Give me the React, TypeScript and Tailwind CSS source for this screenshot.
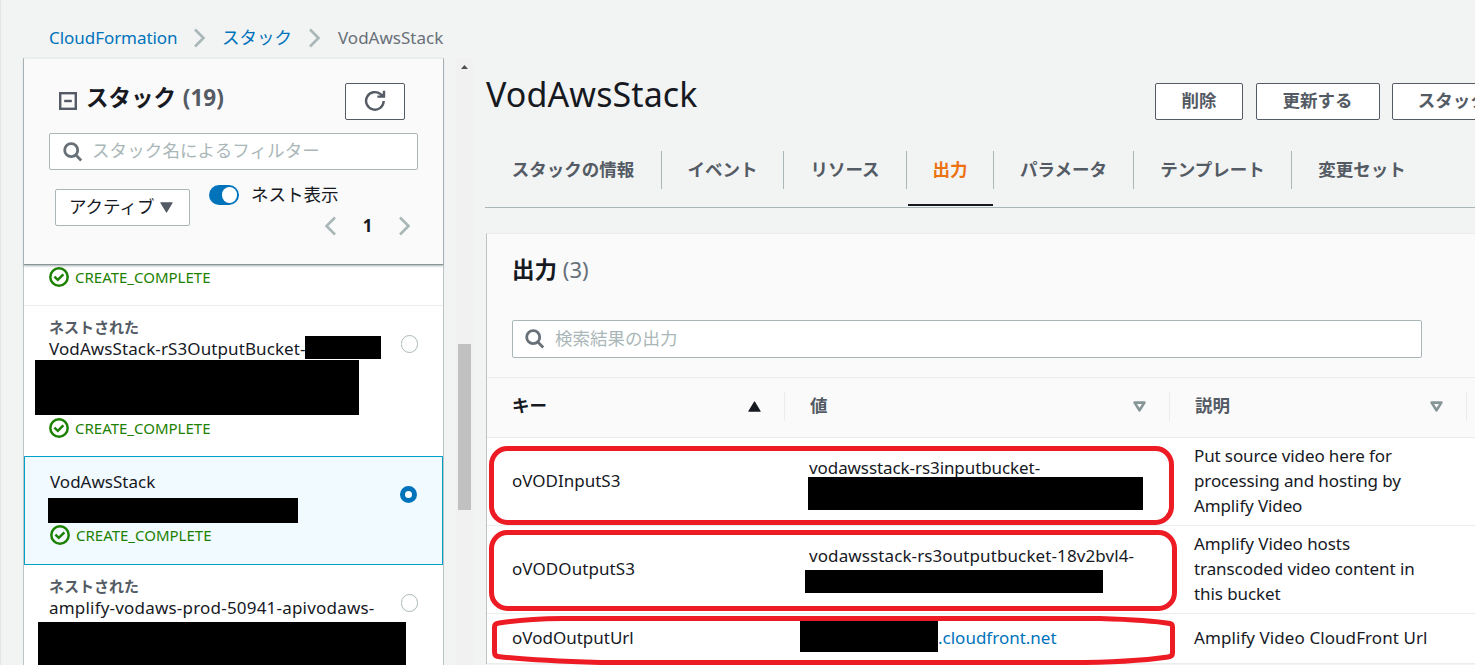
import { ReactNode } from "react";
import clsx from "clsx";

const TABS = [
  { label: "スタックの情報", width: "w-[177px]" },
  { label: "イベント", width: "w-[122px]" },
  { label: "リソース", width: "w-[123px]" },
  { label: "出力", width: "w-[87px]", active: true },
  { label: "パラメータ", width: "w-[140px]" },
  { label: "テンプレート", width: "w-[158px]" },
  { label: "変更セット", width: "w-[140px]" },
];

function Chevron({ left }: { left?: boolean }) {
  return (
    <svg
      width="14"
      height="22"
      viewBox="0 0 14 22"
      fill="none"
      stroke="#aab7b8"
      strokeWidth="2.6"
      className={clsx("shrink-0", left && "rotate-180")}
    >
      <path d="M2 2.5 10.5 11 2 19.5" />
    </svg>
  );
}

function SearchIcon() {
  return (
    <svg
      width="20"
      height="20"
      viewBox="0 0 20 20"
      fill="none"
      stroke="#687078"
      strokeWidth="2.8"
      className="shrink-0"
    >
      <circle cx="8.2" cy="8.2" r="6.5" />
      <path d="M12.6 12.8l5.6 5.6" />
    </svg>
  );
}

function RefreshIcon() {
  return (
    <svg width="22" height="22" viewBox="0 0 22 22" fill="none" stroke="#545b64" strokeWidth="2.4">
      <path d="M19.7 11A8.8 8.8 0 1 1 16.6 4.2L18.4 6" />
      <path d="M20 .8V6.6H13.4" />
      <path d="M20 2.6V6.6H15.6z" fill="#545b64" stroke="none" />
    </svg>
  );
}

function Estado() {
  return (
    <div className="flex h-5 items-center text-[15px] text-[#1d8102]">
      <svg
        width="20"
        height="20"
        viewBox="0 0 20 20"
        fill="none"
        stroke="#1d8102"
        strokeWidth="2.5"
        className="mr-[6px] shrink-0"
      >
        <circle cx="10" cy="10" r="8.7" />
        <path d="M5.4 9.6 8.8 12.8 14.4 7.3" />
      </svg>
      <span>CREATE_COMPLETE</span>
    </div>
  );
}

function Radio({ checked }: { checked?: boolean }) {
  return (
    <span
      className={clsx(
        "block size-[17.5px] shrink-0 rounded-full bg-white",
        checked ? "border-[5.5px] border-[#0073bb]" : "border border-[#aab7b8]",
      )}
    />
  );
}

function Oculto({ className }: { className: string }) {
  return <div className={clsx("absolute bg-black", className)} />;
}

function Boton({ children, className }: { children: ReactNode; className: string }) {
  return (
    <button
      className={clsx(
        "flex h-[37px] shrink-0 items-center justify-center rounded-[2px] border border-[#545b64] bg-white pb-[3px] text-[17.5px] font-bold whitespace-nowrap text-[#545b64]",
        className,
      )}
    >
      {children}
    </button>
  );
}

function Breadcrumbs() {
  return (
    <nav className="flex h-[58px] items-center pt-[18px] pl-[49px] text-[17px] text-[#0073bb]">
      <span className="w-[144px] tracking-[-0.05px]">CloudFormation</span>
      <Chevron />
      <span className="mb-0.5 ml-[15px] w-[86px] text-[17.5px]">スタック</span>
      <Chevron />
      <span className="ml-[16px] text-[#687078]">VodAwsStack</span>
    </nav>
  );
}

function StackList() {
  return (
    <aside className="flex h-[607px] w-[421px] shrink-0 flex-col border-x border-[#bcc3c6] bg-white">
      <div className="relative z-10 h-[207px] shrink-0 border-t border-b border-t-[#eaeded] border-b-[#879596] bg-[#fafafa] px-[25px] shadow-[0_1px_2px_rgba(0,28,36,0.35)]">
        <div className="flex h-[74px] pt-6">
          <svg width="18" height="18" viewBox="0 0 18 18" fill="none" stroke="#545b64" strokeWidth="2.4" className="mt-[9px] ml-[10px]">
            <rect x="1.2" y="1.2" width="15.6" height="15.6" />
            <path d="M5.2 9h7.6" />
          </svg>
          <h2 className="mt-[-1px] ml-[9px] text-[22.5px] leading-[32px] font-bold text-[#16191f]">
            スタック <span className="ml-px text-[#545b64]">(19)</span>
          </h2>
          <button className="mr-[13px] ml-auto flex h-[37px] w-[60px] items-center justify-center rounded-[2px] border border-[#545b64] bg-white pb-px">
            <RefreshIcon />
          </button>
        </div>
        <div className="flex h-[37px] w-[369px] items-center rounded-[2px] border border-[#aab7b8] bg-white pl-[13px]">
          <SearchIcon />
          <span className="mb-0.5 ml-[9px] text-[17.5px] tracking-[0.1px] text-[#aab7b8]">スタック名によるフィルター</span>
        </div>
        <div className="flex pt-[15px]">
          <div className="mt-1 ml-[6px] flex h-[37px] w-[135px] items-center rounded-[2px] border border-[#aab7b8] bg-white pl-[13px] text-[17.5px] text-[#16191f]">
            <span className="mb-0.5">アクティブ</span>
            <svg width="13" height="11" viewBox="0 0 13 11" fill="#545b64" className="ml-[5px]">
              <path d="M.8.3h11.4a.5.5 0 0 1 .4.8L7 10.3a.6.6 0 0 1-1 0L.4 1.1A.5.5 0 0 1 .8.3z" />
            </svg>
          </div>
          <div className="ml-[19px] flex h-5 items-center">
            <span className="flex h-5 w-[30px] items-center justify-end rounded-full bg-[#0073bb] p-[2px]">
              <span className="size-[15.5px] rounded-full bg-white" />
            </span>
            <span className="mb-0.5 ml-3 text-[17.5px] text-[#16191f]">ネスト表示</span>
          </div>
        </div>
        <div className="mt-[-13px] mr-[6px] flex items-center justify-end text-[17px] font-bold text-[#16191f]">
          <Chevron left />
          <span className="w-[61px] text-center">1</span>
          <Chevron />
        </div>
      </div>

      <div className="h-[41px] shrink-0 border-b border-[#eaeded] px-[25px] pt-[2px]">
        <Estado />
      </div>

      <div className="relative h-[150px] shrink-0 px-[25px] pt-[10px]">
        <div className="flex justify-between">
          <div className="leading-[22px] text-[#16191f]">
            <div className="text-[15px] font-bold text-[#545b64]">ネストされた</div>
            <div className="text-[17px] tracking-[0.1px]">VodAwsStack-rS3OutputBucket-</div>
          </div>
          <div className="mt-[19px]">
            <Radio />
          </div>
        </div>
        <Oculto className="top-[30px] left-[281px] h-[23px] w-[76px]" />
        <Oculto className="top-[54px] left-[11px] h-[55px] w-[324px]" />
        <div className="mt-[58px]">
          <Estado />
        </div>
      </div>

      <div className="relative h-[109px] shrink-0 border border-[#00a1c9] bg-[#f1faff] px-[25px] pt-3">
        <div className="flex justify-between">
          <div className="text-[17px] leading-[25px] text-[#16191f]">VodAwsStack</div>
          <div className="mt-[16.5px]">
            <Radio checked />
          </div>
        </div>
        <Oculto className="top-[41px] left-[23px] h-[25px] w-[250px]" />
        <div className="mt-[22px]">
          <Estado />
        </div>
      </div>

      <div className="relative h-[100px] shrink-0 px-[25px] pt-[10px]">
        <div className="flex justify-between">
          <div className="leading-[22px] text-[#16191f]">
            <div className="text-[15px] font-bold text-[#545b64]">ネストされた</div>
            <div className="text-[17px] tracking-[0.2px]">amplify-vodaws-prod-50941-apivodaws-</div>
          </div>
          <div className="mt-[19px]">
            <Radio />
          </div>
        </div>
        <Oculto className="top-[57px] left-[14px] h-[43px] w-[368px]" />
      </div>
    </aside>
  );
}

function Scrollbar() {
  return (
    <div className="ml-3 flex h-[607px] w-[17px] shrink-0 flex-col items-center bg-[#f1f1f1] pt-[7px]">
      <svg width="7" height="4" viewBox="0 0 7 4" fill="#505050">
        <path d="M0 4 3.5 0 7 4z" />
      </svg>
      <div className="mt-[275px] h-[166px] w-[13px] bg-[#c1c1c1]" />
    </div>
  );
}

function SortIcon() {
  return (
    <svg width="13" height="11" viewBox="0 0 13 11" fill="none" stroke="#879596" strokeWidth="2.6" strokeLinejoin="round">
      <path d="M1.6 1.6h9.8L6.5 9.3z" />
    </svg>
  );
}

function OutputsTable() {
  return (
    <div className="grid grid-cols-[298px_385px_306px] text-[17px] leading-[25px] text-[#16191f]">
      <div className="col-span-3 grid h-[61px] grid-cols-subgrid items-center border-y border-[#eaeded] bg-[#fafafa] text-[17.5px] font-bold text-[#545b64]">
        <div className="mt-[-2px] flex h-[29px] items-center justify-between border-r border-[#eaeded] pr-[23px] pl-[25px]">
          <span className="mb-[3px] text-[#16191f]">キー</span>
          <svg width="13" height="11" viewBox="0 0 13 11" fill="#16191f">
            <path d="M.8 10.7h11.4a.5.5 0 0 0 .4-.8L7 .7a.6.6 0 0 0-1 0L.4 9.9a.5.5 0 0 0 .4.8z" />
          </svg>
        </div>
        <div className="mt-[-2px] flex h-[29px] items-center justify-between border-r border-[#eaeded] pr-[23px] pl-[25px]">
          <span className="mb-[3px]">値</span>
          <SortIcon />
        </div>
        <div className="mt-[-2px] mr-[9px] flex h-[29px] items-center justify-between border-r border-[#eaeded] pr-[23px] pl-[25px]">
          <span className="mb-[3px]">説明</span>
          <SortIcon />
        </div>
      </div>

      <div className="col-span-3 grid h-[88px] grid-cols-subgrid items-center border-b border-[#eaeded] pb-0.5">
        <div className="pl-[25px]">oVODInputS3</div>
        <div className="relative h-[52px] pl-6 tracking-[-0.08px]">
          vodawsstack-rs3inputbucket-
          <Oculto className="top-[22px] left-[23px] h-[33px] w-[335px]" />
        </div>
        <div className="pl-6 tracking-[-0.12px]">
          Put source video here for
          <br />
          processing and hosting by
          <br />
          Amplify Video
        </div>
      </div>

      <div className="col-span-3 grid h-[88px] grid-cols-subgrid items-center border-b border-[#eaeded] pb-0.5">
        <div className="pl-[25px] tracking-[0.08px]">oVODOutputS3</div>
        <div className="relative h-[52px] pl-6 tracking-[0.1px]">
          vodawsstack-rs3outputbucket-18v2bvl4-
          <Oculto className="top-[27px] left-5 h-[23px] w-[298px]" />
        </div>
        <div className="pl-6 tracking-[-0.08px]">
          Amplify Video hosts
          <br />
          transcoded video content in
          <br />
          this bucket
        </div>
      </div>

      <div className="col-span-3 grid h-[50px] grid-cols-subgrid items-center border-b border-[#eaeded] pb-0.5">
        <div className="pl-[25px]">oVodOutputUrl</div>
        <div className="flex items-center pl-[15px]">
          <span className="mb-[3px] h-[31px] w-[138px] bg-black" />
          <span className="text-[#0073bb]">.cloudfront.net</span>
        </div>
        <div className="pl-6 tracking-[0.08px]">Amplify Video CloudFront Url</div>
      </div>
    </div>
  );
}

// hand drawn marks around the key / value pairs
function Marcas() {
  return (
    <svg
      className="pointer-events-none absolute top-0 left-[-1px]"
      width="1475"
      height="665"
      fill="none"
      stroke="#ed1c24"
      strokeWidth="5"
    >
      <rect x="491.5" y="448.5" width="680" height="74" rx="16" />
      <rect x="491.5" y="532.5" width="683" height="76" rx="16" />
      <path d="M562 618.5H1100Q1150 620 1170 623.5Q1172.5 624 1172.5 627V653Q1172.5 656.5 1168 657Q1130 662.5 1070 662.5H600Q530 660.5 498 656.5Q494.5 656 494.5 652V627Q494.5 623.5 499 623Q525 619 562 618.5Z" />
    </svg>
  );
}

export default function App() {
  return (
    <div className="relative h-[665px] w-[1475px] overflow-hidden border-l border-[#e3e6e6] bg-[#f2f3f3] font-['Noto_Sans','Noto_Sans_CJK_JP',sans-serif] text-[#16191f]">
      <div className="ml-[-1px]">
        <Breadcrumbs />
        <div className="flex pl-[23px]">
          <StackList />
          <Scrollbar />
          <main className="ml-3 w-[1002px] shrink-0">
            <div className="flex h-[75px]">
              <h1 className="w-[670px] shrink-0 pt-[13px] pl-px text-[34px] leading-[46px] tracking-[0.1px]">
                VodAwsStack
              </h1>
              <div className="flex gap-[12.5px] pt-[25px]">
                <Boton className="w-[88px]">削除</Boton>
                <Boton className="w-[124px]">更新する</Boton>
                <Boton className="w-[208px]">スタックアクション</Boton>
              </div>
            </div>

            <div className="flex h-[75px] border-b border-[#aab7b8]">
              {TABS.map((tab, i) => (
                <div
                  key={tab.label}
                  className={clsx("flex shrink-0 flex-col justify-between", tab.width)}
                >
                  <div
                    className={clsx(
                      "mt-[18px] flex h-[38px] items-center justify-center pb-[2px] text-[17.5px] font-bold",
                      i < TABS.length - 1 && "border-r border-[#aab7b8]",
                      tab.active ? "text-[#ec7211]" : "text-[#545b64]",
                    )}
                  >
                    {tab.label}
                  </div>
                  {tab.active && <div className="mr-px mb-px ml-px h-[2px] bg-[#16191f]" />}
                </div>
              ))}
            </div>

            <section className="mt-[25px] ml-px border-t border-l border-t-[#eaeded] border-l-[#bcc3c6] bg-white">
              <div className="h-[143px] bg-[#fafafa] px-[25px] pt-[18px]">
                <h2 className="h-[34px] text-[22.5px] leading-[34px] font-bold">
                  出力 <span className="text-[22px] font-normal text-[#687078]">(3)</span>
                </h2>
                <div className="mt-[34px] flex h-[38px] w-[910px] items-center rounded-[2px] border border-[#aab7b8] bg-white pl-3">
                  <SearchIcon />
                  <span className="mb-0.5 ml-[10px] text-[17.5px] text-[#aab7b8]">検索結果の出力</span>
                </div>
              </div>
              <OutputsTable />
            </section>
          </main>
        </div>
      </div>
      <Marcas />
    </div>
  );
}
